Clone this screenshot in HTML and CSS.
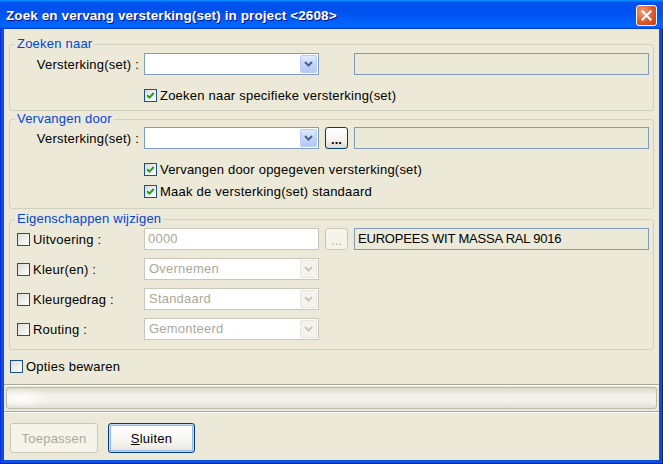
FILE: index.html
```html
<!DOCTYPE html>
<html lang="nl">
<head>
<meta charset="utf-8">
<title>Zoek en vervang versterking(set)</title>
<link rel="stylesheet" href="styles.css">
</head>
<body>
<div class="window">
  <div class="titlebar">
    <span class="title">Zoek en vervang versterking(set) in project &lt;2608&gt;</span>
    <span class="close"><svg width="11" height="11" viewBox="0 0 11 11"><path d="M1.5 1.5 L9.5 9.5 M9.5 1.5 L1.5 9.5" stroke="#fff" stroke-width="2" stroke-linecap="square"/></svg></span>
  </div>
  <div class="client">
    <fieldset class="group g1">
      <legend>Zoeken naar</legend>
      <div class="field">
        <span class="lbl">Versterking(set) :</span>
        <span class="combo"><span class="val"></span><span class="drop"><svg width="9" height="6" viewBox="0 0 9 6"><path d="M1 1 L4.5 4.5 L8 1" fill="none" stroke="#4D6185" stroke-width="2"/></svg></span></span>
        <span class="ro wide-gap"></span>
      </div>
      <div class="check-row first">
        <span class="cb"><svg width="9" height="9" viewBox="0 0 9 9"><path d="M1.2 4.2 L3.4 6.6 L7.8 2" fill="none" stroke="#21A121" stroke-width="2"/></svg></span>
        <span>Zoeken naar specifieke versterking(set)</span>
      </div>
    </fieldset>

    <fieldset class="group g2">
      <legend>Vervangen door</legend>
      <div class="field">
        <span class="lbl">Versterking(set) :</span>
        <span class="combo"><span class="val"></span><span class="drop"><svg width="9" height="6" viewBox="0 0 9 6"><path d="M1 1 L4.5 4.5 L8 1" fill="none" stroke="#4D6185" stroke-width="2"/></svg></span></span>
        <span class="dots">...</span>
        <span class="ro"></span>
      </div>
      <div class="check-row first">
        <span class="cb"><svg width="9" height="9" viewBox="0 0 9 9"><path d="M1.2 4.2 L3.4 6.6 L7.8 2" fill="none" stroke="#21A121" stroke-width="2"/></svg></span>
        <span>Vervangen door opgegeven versterking(set)</span>
      </div>
      <div class="check-row second">
        <span class="cb"><svg width="9" height="9" viewBox="0 0 9 9"><path d="M1.2 4.2 L3.4 6.6 L7.8 2" fill="none" stroke="#21A121" stroke-width="2"/></svg></span>
        <span>Maak de versterking(set) standaard</span>
      </div>
    </fieldset>

    <fieldset class="group g3">
      <legend>Eigenschappen wijzigen</legend>
      <div class="field">
        <span class="chk-lbl"><span class="cb"></span><span>Uitvoering :</span></span>
        <span class="input disabled">0000</span>
        <span class="dots disabled">...</span>
        <span class="ro text">EUROPEES WIT MASSA RAL 9016</span>
      </div>
      <div class="field next">
        <span class="chk-lbl"><span class="cb"></span><span>Kleur(en) :</span></span>
        <span class="combo disabled"><span class="val">Overnemen</span><span class="drop"><svg width="9" height="6" viewBox="0 0 9 6"><path d="M1 1 L4.5 4.5 L8 1" fill="none" stroke="#C9C7BA" stroke-width="2"/></svg></span></span>
      </div>
      <div class="field next">
        <span class="chk-lbl"><span class="cb"></span><span>Kleurgedrag :</span></span>
        <span class="combo disabled"><span class="val">Standaard</span><span class="drop"><svg width="9" height="6" viewBox="0 0 9 6"><path d="M1 1 L4.5 4.5 L8 1" fill="none" stroke="#C9C7BA" stroke-width="2"/></svg></span></span>
      </div>
      <div class="field next">
        <span class="chk-lbl"><span class="cb"></span><span>Routing :</span></span>
        <span class="combo disabled"><span class="val">Gemonteerd</span><span class="drop"><svg width="9" height="6" viewBox="0 0 9 6"><path d="M1 1 L4.5 4.5 L8 1" fill="none" stroke="#C9C7BA" stroke-width="2"/></svg></span></span>
      </div>
    </fieldset>

    <div class="opties"><span class="cb"></span><span>Opties bewaren</span></div>

    <div class="sep sep1"></div>
    <div class="progress"></div>
    <div class="sep sep2"></div>

    <div class="buttons">
      <span class="btn disabled">Toepassen</span>
      <span class="btn default"><span><u>S</u>luiten</span></span>
    </div>
  </div>
</div>
</body>
</html>
```

FILE: styles.css
```css
* { box-sizing: border-box; }
html, body { margin: 0; padding: 0; }
body {
  width: 663px;
  height: 464px;
  overflow: hidden;
  font-family: "Liberation Sans", Arial, sans-serif;
  font-size: 13px;
  letter-spacing: 0.22px;
  color: #000;
  background: #fff;
}
.window {
  width: 663px;
  height: 464px;
  display: flex;
  flex-direction: column;
  background: #0A50E0;
  box-shadow: inset 1px 0 #0831D9, inset -1px 0 #001EA0, inset 0 -1px #001EA0;
}
.titlebar {
  height: 29px;
  flex: none;
  display: flex;
  align-items: center;
  padding: 1px 6px 0 6px;
  background: linear-gradient(180deg, #0997FF, #0053EE 8%, #0050EE 40%, #0066FF 88%, #0066FF 93%, #005BFF 95%, #003DD7 96%, #003DD7);
}
.title {
  flex: 1;
  color: #fff;
  font-weight: bold;
  font-size: 13.5px;
  letter-spacing: 0.1px;
  text-shadow: 1px 1px #0F1089;
  white-space: nowrap;
}
.close {
  width: 21px;
  height: 21px;
  flex: none;
  border: 1px solid #fff;
  border-radius: 3px;
  background: radial-gradient(circle at 30% 30%, #F29B7B, #E0582E 55%, #C83D17);
  display: flex;
  align-items: center;
  justify-content: center;
}
.client {
  flex: 1;
  margin: 0 4px 4px;
  background: #ECE9D8;
  padding-top: 8px;
  display: flex;
  flex-direction: column;
}
.group {
  margin: 0 5px;
  padding: 2px 0 7px;
  border: 1px solid #D0D0BF;
  border-radius: 3px;
  min-width: 0;
}
.group legend {
  margin-left: 5px;
  padding: 0 2px;
  color: #0046D5;
  line-height: 14px;
  height: 14px;
}
.g2 { margin-top: 1px; padding: 1px 0 9px; }
.g3 { margin-top: 3px; padding: 2px 0 9px; }

.field {
  display: flex;
  align-items: center;
  height: 22px;
}
.field.next { margin-top: 8px; }
.lbl {
  width: 129px;
  flex: none;
  text-align: right;
}
.combo {
  margin-left: 5px;
  width: 175px;
  height: 22px;
  flex: none;
  border: 1px solid #7F9DB9;
  background: #fff;
  display: flex;
  align-items: stretch;
  padding: 1px;
}
.combo .val {
  flex: 1;
  padding-left: 3px;
  line-height: 18px;
  overflow: hidden;
}
.combo .drop {
  width: 17px;
  flex: none;
  border: 1px solid #B9CCF6;
  border-radius: 2px;
  background: linear-gradient(180deg, #E1EAFE, #C4D5FA 50%, #B2C8F7);
  display: flex;
  align-items: center;
  justify-content: center;
}
.combo.disabled { border-color: #C9C7BA; margin-left: 0; color: #ACA899; }
.combo.disabled .drop {
  border-color: #E8E6DC;
  background: #F4F3EE;
}
.ro {
  margin-left: 6px;
  width: 295px;
  height: 22px;
  flex: none;
  border: 1px solid #7F9DB9;
  background: #ECE9D8;
  padding: 0 3px;
  line-height: 20px;
  white-space: nowrap;
}
.ro.text { letter-spacing: -0.2px; }
.ro.wide-gap { margin-left: 35px; }
.dots {
  margin-left: 6px;
  width: 23px;
  height: 22px;
  flex: none;
  border: 1px solid #003C74;
  border-radius: 3px;
  background: linear-gradient(180deg, #FFFFFF, #F4F3EE 60%, #DCD8CC);
  display: flex;
  justify-content: center;
  align-items: flex-end;
  font-weight: bold;
  line-height: 12px;
  padding-bottom: 2px;
  letter-spacing: 0;
}
.dots.disabled {
  border-color: #C9C7BA;
  background: #F5F4EA;
  color: #ACA899;
  font-weight: normal;
}
.input {
  width: 175px;
  height: 22px;
  flex: none;
  border: 1px solid #C9C7BA;
  background: #fff;
  padding-left: 3px;
  line-height: 20px;
}
.input.disabled { color: #ACA899; }

.cb {
  width: 13px;
  height: 13px;
  flex: none;
  border: 1px solid #1C5180;
  background: linear-gradient(135deg, #DCDCD7, #FFFFFF);
  display: flex;
  align-items: center;
  justify-content: center;
}
.check-row {
  display: flex;
  align-items: center;
  gap: 3px;
  height: 16px;
  padding-left: 134px;
}
.check-row.first { margin-top: 12px; }
.check-row.second { margin-top: 6px; }
.chk-lbl {
  width: 134px;
  flex: none;
  padding-left: 7px;
  display: flex;
  align-items: center;
  gap: 3px;
}
.opties {
  margin: 8px 0 0 6px;
  height: 16px;
  display: flex;
  align-items: center;
  gap: 3px;
}
.sep {
  height: 2px;
  flex: none;
  border-top: 1px solid #ACA899;
  border-bottom: 1px solid #fff;
}
.sep1 { margin-top: 10px; }
.sep2 { margin-top: 2px; }
.progress {
  margin: 1px 2px 0;
  height: 22px;
  flex: none;
  border: 1px solid #BDBAAC;
  border-radius: 3px;
  background:
    radial-gradient(ellipse 30px 10px at 14px 50%, rgba(255,255,255,0.9), rgba(255,255,255,0) 100%),
    linear-gradient(180deg, #DEDBCD, #F1EFE6 35%, #F3F2EC 65%, #E3E0D3);
}
.buttons {
  margin-top: 10px;
  padding-left: 6px;
  display: flex;
  gap: 10px;
}
.btn {
  height: 30px;
  border: 1px solid #003C74;
  border-radius: 3px;
  background: linear-gradient(180deg, #FFFFFF, #F4F3EE 70%, #E3E0D5);
  display: flex;
  align-items: center;
  justify-content: center;
}
.btn.disabled {
  width: 88px;
  border-color: #C9C7BA;
  background: #F5F4EA;
  color: #ACA899;
}
.btn.default {
  width: 87px;
  box-shadow: inset 0 0 0 1px #C5DAFA, inset 0 0 0 2px #98B6EC;
}
```
